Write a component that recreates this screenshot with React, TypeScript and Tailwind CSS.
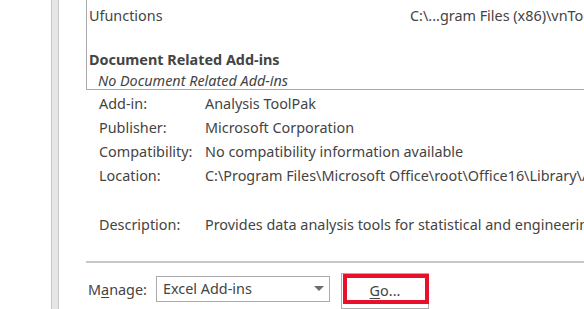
const details = [
  { label: 'Add-in:', value: 'Analysis ToolPak' },
  { label: 'Publisher:', value: 'Microsoft Corporation' },
  { label: 'Compatibility:', value: 'No compatibility information available' },
  { label: 'Location:', value: 'C:\\Program Files\\Microsoft Office\\root\\Office16\\Library\\Analysis\\ANALYS32.XLL' },
];

export default function App() {
  return (
    <div
      className="w-[584px] h-[309px] overflow-hidden bg-white flex text-[#444] text-[14.4px] leading-none"
      style={{ fontFamily: '"Segoe UI", "Noto Sans", "Open Sans", sans-serif' }}
    >
      <div className="w-[51px] shrink-0" />
      <div className="w-[8px] shrink-0 bg-[#e6e6e6] border-x border-[#c6c6c6]" />
      <div className="flex-1 min-w-0 pl-[27px] flex flex-col">
        {/* add-in list (scrolled) */}
        <div className="h-[90px] border-l border-b border-[#a9a9a9] pl-[2px] whitespace-nowrap overflow-hidden">
          <div className="flex h-[32px] items-center">
            <span className="w-[321px] shrink-0">Ufunctions</span>
            <span className="shrink-0">C:\...gram Files (x86)\vnTools\Ufunctions.xlam</span>
          </div>
          <div className="h-[17px]" />
          <div className="font-bold h-[22px] flex items-center">Document Related Add-ins</div>
          <div className="italic pl-[9px] h-[20px] flex items-center">No Document Related Add-ins</div>
        </div>

        {/* details */}
        <div className="pl-[13px] pt-[3px] whitespace-nowrap overflow-hidden">
          {details.map((d) => (
            <div key={d.label} className="flex h-[24px] items-center">
              <span className="w-[106px] shrink-0">{d.label}</span>
              <span className="shrink-0">{d.value}</span>
            </div>
          ))}
          <div className="h-[25px]" />
          <div className="flex h-[24px] items-center">
            <span className="w-[106px] shrink-0">Description:</span>
            <span className="shrink-0">Provides data analysis tools for statistical and engineering analysis</span>
          </div>
        </div>

        <div className="mt-[24px] h-[2px] bg-[#c8c8c8]" />

        <div className="flex items-start">
          <span className="w-[70px] pl-[2px] mt-[20px]">
            M<span className="underline underline-offset-2">a</span>nage:
          </span>
          <div className="mt-[13px] w-[174px] h-[26px] border border-[#ababab] flex items-center justify-between pl-[6px] pr-[4px]">
            <span>Excel Add-ins</span>
            <svg width="10" height="6" viewBox="0 0 10 6" className="mr-[1px]">
              <path d="M0 0 L10 0 L5 5 Z" fill="#6d6d6d" />
            </svg>
          </div>
          <div className="mt-[10px] ml-[11px] w-[88px] h-[36px] border border-[#adadad] relative flex items-start justify-center pt-[10px]">
            <span>
              <span className="underline underline-offset-2">G</span>o...
            </span>
            <div className="absolute left-[1px] top-[0px] w-[86px] h-[30px] border-[4px] border-[#e8102a]" />
          </div>
        </div>
      </div>
    </div>
  );
}
